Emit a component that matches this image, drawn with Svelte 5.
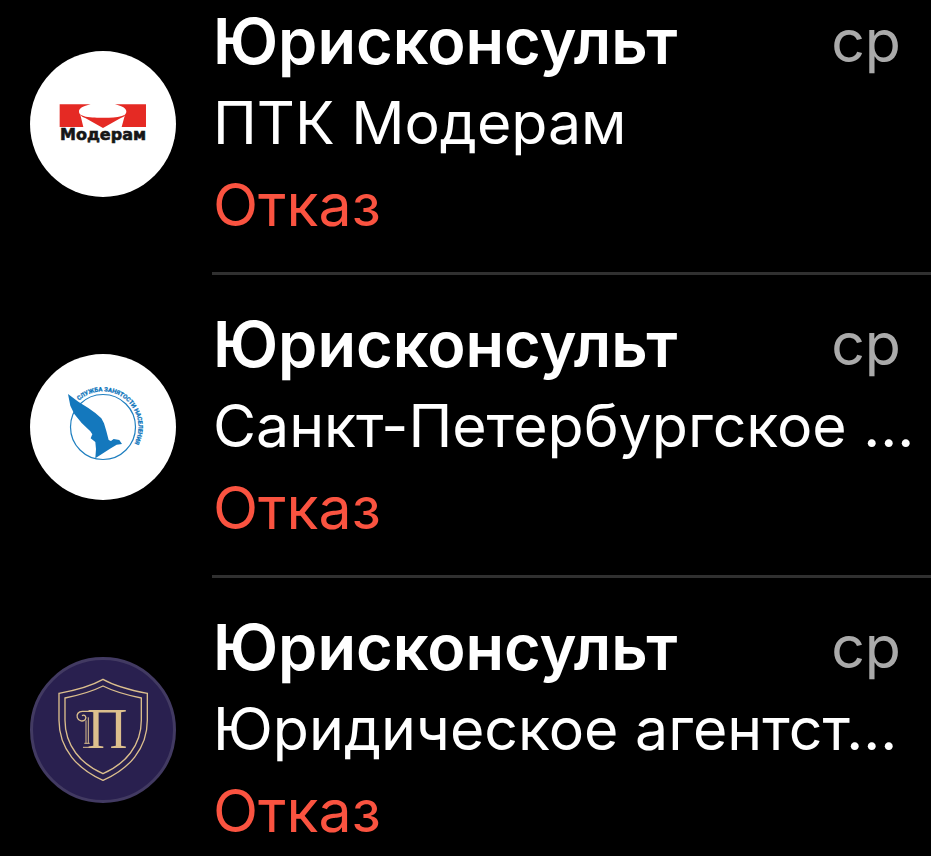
<script lang="ts">
    interface Response {
        id: number;
        logo: 'moderam' | 'employment' | 'agency';
        title: string;
        company: string;
        day: string;
        status: string;
    }

    const responses: Response[] = [
        { id: 1, logo: 'moderam', title: 'Юрисконсульт', company: 'ПТК Модерам', day: 'ср', status: 'Отказ' },
        { id: 2, logo: 'employment', title: 'Юрисконсульт', company: 'Санкт-Петербургское ...', day: 'ср', status: 'Отказ' },
        { id: 3, logo: 'agency', title: 'Юрисконсульт', company: 'Юридическое агентст...', day: 'ср', status: 'Отказ' },
    ];
</script>

{#snippet moderam()}
    <svg class="avatar" viewBox="0 0 146 146" aria-hidden="true">
        <circle cx="73" cy="73" r="73" fill="#fff" />
        <g transform="translate(-5 -6) scale(0.3333)" fill="#e52a24">
            <path d="M104 178H197C174 183 162 190 162 199C162 203 163 206 166 209L175 246H104Z" />
            <path d="M363 178H270C292 183 304 190 304 199C304 203 303 206 300 209L290 246H363Z" />
            <path d="M164 208C184 220 210 218 234 218C258 218 282 220 303 208C299 214 293 217 286 220L234 249L182 220C175 217 168 214 164 208Z" />
        </g>
        <text class="moderam-name" x="73" y="89" text-anchor="middle">Модерам</text>
    </svg>
{/snippet}

{#snippet employment()}
    <svg class="avatar" viewBox="0 0 146 146" aria-hidden="true">
        <circle cx="73" cy="73" r="73" fill="#fff" />
        <circle cx="73" cy="73" r="32.5" fill="none" stroke="#1f7fc0" stroke-width="1.2" />
        <path
            transform="translate(-5 -5) scale(0.3333)"
            fill="#1478bd"
            d="M129 135L160 158L190 177L211 192L229 208L237 223L244 246L251 273L258 276L266 270L283 273L291 285L275 287L255 299L211 328L213 300L211 279L197 268L202 256L196 247L170 222L148 195L136 170Z"
        />
        <path id="employment-arc" d="M49 46.6A35.6 35.6 0 1 1 73 108.6" fill="none" />
        <text class="employment-name">
            <textPath href="#employment-arc">СЛУЖБА ЗАНЯТОСТИ НАСЕЛЕНИЯ</textPath>
        </text>
    </svg>
{/snippet}

{#snippet agency()}
    <svg class="avatar" viewBox="0 0 146 146" aria-hidden="true">
        <circle cx="73" cy="73" r="71.5" fill="#29204f" stroke="#423a62" stroke-width="3" />
        <g transform="translate(-5 -5) scale(0.3333)" fill="none" stroke="#dcbf8d" stroke-width="4">
            <path d="M102 124C145 116 197 103 234 82C271 103 324 116 367 124V205C367 292 310 352 234 385C159 352 102 292 102 205Z" />
            <path d="M120 138C160 130 202 118 234 102C266 118 309 130 349 138V205C349 282 300 336 234 365C168 336 120 282 120 205Z" />
            <path d="M202 178H172C160 178 154 187 157 197C160 208 175 210 181 202C186 194 178 186 171 191" />
            <path d="M183 205V274M190 196V274M178 274H194M174 286H200" stroke-width="3" />
        </g>
        <text class="agency-name" x="57" y="90.5">П</text>
    </svg>
{/snippet}

<ul class="responses">
    {#each responses as item (item.id)}
        <li class="response">
            {#if item.logo === 'moderam'}
                {@render moderam()}
            {:else if item.logo === 'employment'}
                {@render employment()}
            {:else}
                {@render agency()}
            {/if}
            <div class="content">
                <div class="heading">
                    <h2 class="title">{item.title}</h2>
                    <span class="day">{item.day}</span>
                </div>
                <p class="company">{item.company}</p>
                <p class="status">{item.status}</p>
            </div>
        </li>
    {/each}
</ul>

<style>
    :global(body) {
        margin: 0;
        background: #000;
    }

    .responses {
        list-style: none;
        margin: 0;
        padding: 0;
        background: #000;
        color: #fff;
        font-family: Inter, 'Liberation Sans', sans-serif;
        font-size: 59px;
        line-height: 82px;
    }

    .response {
        display: flex;
        align-items: stretch;
        gap: 36px;
        padding-left: 30px;
    }

    .avatar {
        width: 146px;
        height: 146px;
        flex-shrink: 0;
        margin-top: 51px;
    }

    .content {
        flex: 1;
        min-width: 0;
        padding: 0 30px 26px 1px;
        border-bottom: 3px solid #303030;
    }

    .response + .response {
        padding-top: 28px;
    }

    .response:last-child .content {
        padding-bottom: 0;
        border-bottom: none;
    }

    .heading {
        display: flex;
        justify-content: space-between;
    }

    .title,
    .company,
    .status {
        margin: 0;
        white-space: nowrap;
    }

    .title {
        font-size: 63px;
        font-weight: 600;
    }

    .day {
        color: #aaa;
    }

    .status {
        color: #fa5340;
    }

    .moderam-name {
        font: bold 16px 'DejaVu Sans', sans-serif;
        fill: #161616;
        stroke: #161616;
        stroke-width: 0.6;
    }

    .employment-name {
        font: bold 6px Roboto, 'Liberation Sans', sans-serif;
        fill: #1478bd;
        stroke: #1478bd;
        stroke-width: 0.3;
    }

    .agency-name {
        font: 56px 'Liberation Serif', serif;
        fill: #dcbf8d;
    }
</style>
